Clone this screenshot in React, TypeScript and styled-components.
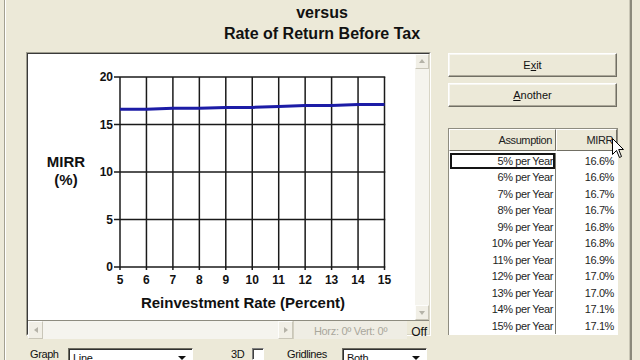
import React from "react";
import styled, { createGlobalStyle } from "styled-components";

const GlobalStyle = createGlobalStyle`
  html, body {
    margin: 0;
    padding: 0;
    background: #ece9d8;
  }
  body {
    font-family: "Liberation Sans", Arial, sans-serif;
  }
`;

const MIRR = [16.6, 16.6, 16.7, 16.7, 16.8, 16.8, 16.9, 17.0, 17.0, 17.1, 17.1];
const RATES = [5, 6, 7, 8, 9, 10, 11, 12, 13, 14, 15];

// chart scale, page coordinates
const X = (v: number) => 120 + (v - 5) * 26.45;
const Y = (v: number) => 267 - v * 9.5;

const Page = styled.div`
  position: relative;
  width: 640px;
  height: 360px;
  overflow: hidden;
  display: flex;
  padding-left: 4px;
  box-sizing: border-box;
  background: #ece9d8;
`;

const Frame = styled.div`
  width: 628px;
  height: 360px;
  box-sizing: border-box;
  border-left: 1px solid #a3a091;
  border-right: 2px solid #8b897b;
  box-shadow: inset 1px 0 0 #fff, inset -1px 0 0 #c9c6b6;
  display: flex;
  flex-direction: column;
`;

const Title = styled.div`
  padding: 2px 0 0 9px;
  height: 44px;
  box-sizing: border-box;
  text-align: center;
  font-size: 16px;
  font-weight: bold;
  line-height: 21px;
  color: #111;
`;

const Content = styled.div`
  margin-top: 8px;
  display: flex;
  align-items: flex-start;
  padding-left: 21px;
  gap: 17px;
`;

const ChartColumn = styled.div`
  width: 405px;
  display: flex;
  flex-direction: column;
`;

const ChartFrame = styled.div`
  width: 405px;
  height: 284px;
  box-sizing: border-box;
  border: 1px solid;
  border-color: #a09e90 #fff #fff #a09e90;
`;

const ChartInner = styled.div`
  height: 100%;
  box-sizing: border-box;
  border: 1px solid;
  border-color: #3a3a3a #d8d5c6 #d8d5c6 #3a3a3a;
  display: flex;
  flex-direction: column;
`;

const PlotRow = styled.div`
  display: flex;
  height: 266px;
`;

const Plot = styled.div`
  flex: 1;
  background: #fff;
  svg {
    display: block;
  }
`;

const VScroll = styled.div`
  width: 14px;
  background: #f5f4ee;
  display: flex;
  flex-direction: column;
  justify-content: space-between;
`;

const ArrowBtn = styled.div<{ $dir: "up" | "down" | "left" | "right" }>`
  width: 14px;
  height: 15px;
  box-sizing: border-box;
  background: #f1efe6;
  border: 1px solid;
  border-color: #fdfdfb #c9c6b8 #c9c6b8 #fdfdfb;
  display: flex;
  align-items: center;
  justify-content: center;
  &::after {
    content: "";
    width: 0;
    height: 0;
    border: 3px solid transparent;
    ${(p) =>
      p.$dir === "up"
        ? "border-bottom: 4px solid #b5b3a8; border-top-width: 0; margin-top: -2px;"
        : p.$dir === "down"
        ? "border-top: 4px solid #b5b3a8; border-bottom-width: 0;"
        : p.$dir === "left"
        ? "border-right: 4px solid #b5b3a8; border-left-width: 0;"
        : "border-left: 4px solid #b5b3a8; border-right-width: 0;"}
  }
`;

const BottomBar = styled.div`
  flex: 1;
  display: flex;
  border-top: 1px solid #8e8c80;
`;

const HScroll = styled.div`
  width: 265px;
  background: #f5f4ee;
  display: flex;
  justify-content: space-between;
  ${ArrowBtn} {
    height: 100%;
    width: 15px;
  }
`;

const Status = styled.div`
  flex: 1;
  border-left: 1px solid #d2cfc0;
  background: #efede4;
  color: #a9a79c;
  font-size: 11px;
  letter-spacing: -0.3px;
  display: flex;
  align-items: center;
  justify-content: center;
  padding-top: 1px;
`;

const Off = styled.div`
  width: 20px;
  font-size: 12px;
  color: #111;
  display: flex;
  align-items: center;
  justify-content: flex-end;
  padding-right: 2px;
  padding-top: 4px;
`;

const Controls = styled.div`
  margin-top: 11px;
  display: flex;
  align-items: flex-start;
  padding-left: 4px;
`;

const Label = styled.div<{ $w: number; $ml?: number }>`
  width: ${(p) => p.$w}px;
  margin-left: ${(p) => p.$ml || 0}px;
  font-size: 11px;
  line-height: 11px;
  letter-spacing: -0.4px;
  color: #111;
  padding-top: 2px;
`;

const SelectBox = styled.div<{ $w: number }>`
  width: ${(p) => p.$w}px;
  height: 20px;
  margin-top: 1px;
  box-sizing: border-box;
  background: #fff;
  border: 1px solid;
  border-color: #6f6d62 #fff #fff #6f6d62;
  box-shadow: inset 1px 1px 0 #303030;
  font-size: 11px;
  line-height: 11px;
  letter-spacing: -0.3px;
  color: #111;
  padding: 4px 0 0 4px;
  position: relative;
  &::after {
    content: "";
    position: absolute;
    right: 6px;
    top: 7px;
    border: 4px solid transparent;
    border-top: 4px solid #111;
    border-bottom-width: 0;
  }
`;

const CheckBox = styled.div`
  width: 12px;
  height: 12px;
  margin-top: 1px;
  box-sizing: border-box;
  background: #fff;
  border: 1px solid;
  border-color: #808080 #fff #fff #808080;
  box-shadow: inset 1px 1px 0 #404040;
`;

const RightPanel = styled.div`
  width: 170px;
  padding-top: 1px;
  display: flex;
  flex-direction: column;
`;

const Button = styled.div`
  width: 169px;
  height: 24px;
  box-sizing: border-box;
  margin-bottom: 6px;
  background: #ece9d8;
  border: 1px solid;
  border-color: #fff #716f64 #716f64 #fff;
  box-shadow: inset -1px -1px 0 #aca899, inset 1px 1px 0 #f7f6f0;
  font-size: 11px;
  color: #111;
  display: flex;
  align-items: center;
  justify-content: center;
`;

const Table = styled.div`
  margin-top: 15px;
  width: 170px;
  display: flex;
  flex-direction: column;
`;

const HeaderRow = styled.div`
  display: flex;
  height: 23px;
  box-sizing: border-box;
  border: 1px solid #8e8c80;
  border-bottom: none;
`;

const HeadCell = styled.div<{ $w?: number }>`
  ${(p) => (p.$w ? `width: ${p.$w}px;` : "flex: 1;")}
  box-sizing: border-box;
  background: #ece9d8;
  border: 1px solid;
  border-color: #fff #716f64 #716f64 #fff;
  font-size: 11px;
  letter-spacing: -0.4px;
  color: #222;
  text-align: right;
  padding-right: 3px;
  line-height: 20px;
`;

const Body = styled.div`
  background: #fff;
  border-left: 1px solid #8e8c80;
  height: 184px;
  box-sizing: border-box;
  padding-top: 1.5px;
`;

const Row = styled.div`
  display: flex;
  height: 16.5px;
  font-size: 11px;
  letter-spacing: -0.4px;
  line-height: 16.5px;
  color: #1e1e1e;
`;

const Cell = styled.div<{ $w?: number; $sel?: boolean }>`
  ${(p) => (p.$w ? `width: ${p.$w}px; border-right: 1px solid #7a7a72;` : "flex: 1;")}
  box-sizing: border-box;
  text-align: right;
  padding-right: ${(p) => (p.$w ? 2 : 4)}px;
  ${(p) => (p.$sel ? "box-shadow: inset 0 0 0 2px #141414; margin-left: 1px;" : "")}
`;

const Cursor = styled.svg`
  position: absolute;
  left: 612px;
  top: 138px;
`;

const Chart = () => {
  const pts = RATES.map((r, i) => `${X(r)},${Y(MIRR[i])}`).join(" ");
  return (
    <svg width={387} height={266} viewBox="28 54 387 266">
      <g stroke="#1a1a1a" strokeWidth={1.5}>
        {[0, 5, 10, 15, 20].map((v) => (
          <line key={"h" + v} x1={114} x2={X(15) + 0.75} y1={Y(v)} y2={Y(v)} />
        ))}
        {RATES.map((r) => (
          <line key={"v" + r} x1={X(r)} x2={X(r)} y1={Y(20)} y2={Y(0) + 3} />
        ))}
      </g>
      <polyline points={pts} fill="none" stroke="#1c1ca6" strokeWidth={3} />
      <g fontFamily="'Liberation Sans', Arial, sans-serif" fontWeight="bold" fill="#111">
        {[0, 5, 10, 15, 20].map((v) => (
          <text key={"yl" + v} x={113} y={Y(v) + 4.3} fontSize={12} textAnchor="end">
            {v}
          </text>
        ))}
        {RATES.map((r) => (
          <text key={"xl" + r} x={X(r)} y={283.5} fontSize={12} textAnchor="middle">
            {r}
          </text>
        ))}
        <text x={66} y={167.3} fontSize={15} textAnchor="middle">
          MIRR
        </text>
        <text x={66} y={184.5} fontSize={15} textAnchor="middle">
          (%)
        </text>
        <text x={243} y={307.5} fontSize={15} textAnchor="middle">
          Reinvestment Rate (Percent)
        </text>
      </g>
    </svg>
  );
};

export default function App() {
  return (
    <Page>
      <GlobalStyle />
      <Frame>
        <Title>
          versus
          <br />
          Rate of Return Before Tax
        </Title>
        <Content>
          <ChartColumn>
            <ChartFrame>
              <ChartInner>
                <PlotRow>
                  <Plot>
                    <Chart />
                  </Plot>
                  <VScroll>
                    <ArrowBtn $dir="up" />
                    <ArrowBtn $dir="down" />
                  </VScroll>
                </PlotRow>
                <BottomBar>
                  <HScroll>
                    <ArrowBtn $dir="left" />
                    <ArrowBtn $dir="right" />
                  </HScroll>
                  <Status>Horz: 0º Vert: 0º</Status>
                  <Off>Off</Off>
                </BottomBar>
              </ChartInner>
            </ChartFrame>
            <Controls>
              <Label $w={38}>Graph</Label>
              <SelectBox $w={125}>Line</SelectBox>
              <Label $w={21} $ml={38}>
                3D
              </Label>
              <CheckBox />
              <Label $w={55} $ml={23}>
                Gridlines
              </Label>
              <SelectBox $w={85}>Both</SelectBox>
            </Controls>
          </ChartColumn>
          <RightPanel>
            <Button>
              <span>
                E<u>x</u>it
              </span>
            </Button>
            <Button>
              <span>
                <u>A</u>nother
              </span>
            </Button>
            <Table>
              <HeaderRow>
                <HeadCell $w={107}>Assumption</HeadCell>
                <HeadCell>MIRR</HeadCell>
              </HeaderRow>
              <Body>
                {RATES.map((r, i) => (
                  <Row key={r}>
                    <Cell $w={i === 0 ? 106 : 107} $sel={i === 0}>
                      {r}% per Year
                    </Cell>
                    <Cell>{MIRR[i].toFixed(1)}%</Cell>
                  </Row>
                ))}
              </Body>
            </Table>
          </RightPanel>
        </Content>
      </Frame>
      <Cursor width="13" height="21" viewBox="0 0 13 21">
        <path
          d="M0.5 0.5 L0.5 16.5 L4.5 12.5 L7.5 19.5 L9.5 18.5 L6.7 11.5 L11.5 11.5 Z"
          fill="#fff"
          stroke="#000"
          strokeWidth="1"
          strokeLinejoin="miter"
        />
      </Cursor>
    </Page>
  );
}
